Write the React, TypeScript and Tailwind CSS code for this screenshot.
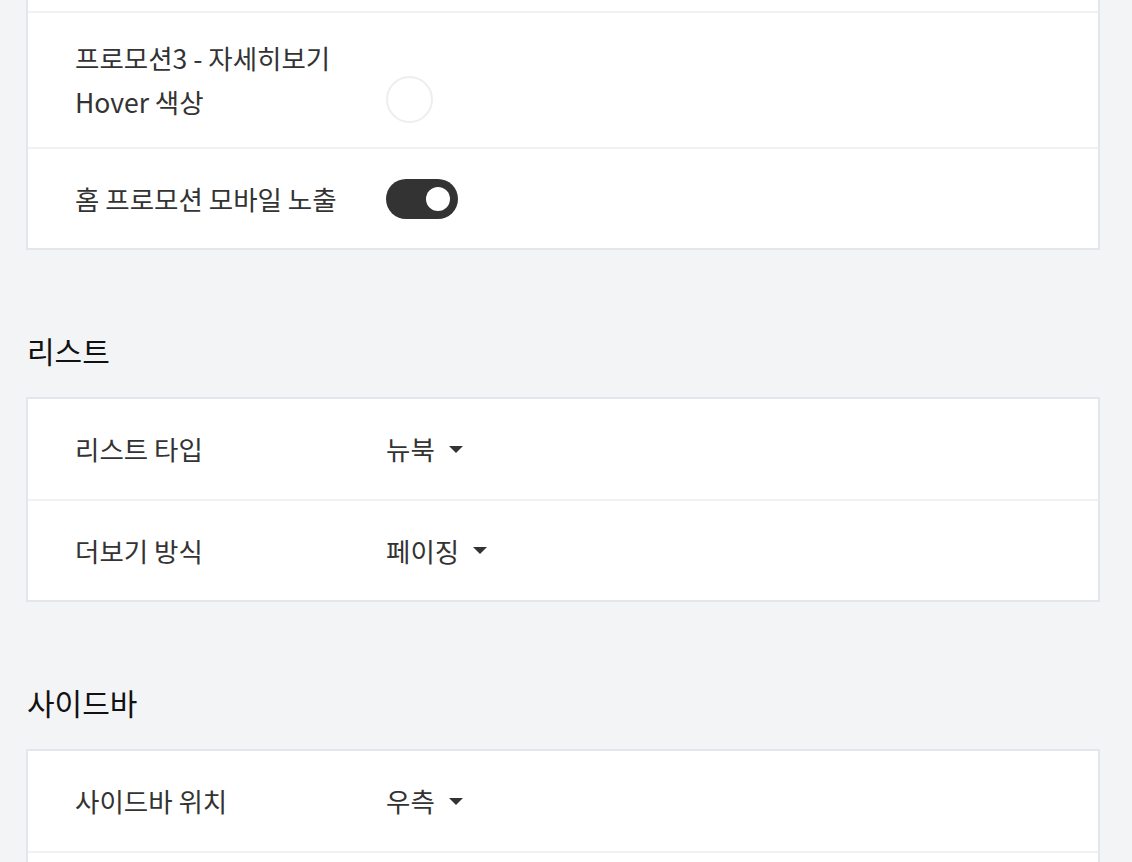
import React from "react";

const font = { fontFamily: '"Noto Sans CJK KR", "Noto Sans", sans-serif' };

function Row({
  label,
  children,
  last,
  align = "items-center",
  pad = "py-[23px]",
}: {
  label?: React.ReactNode;
  children?: React.ReactNode;
  last?: boolean;
  align?: string;
  pad?: string;
}) {
  return (
    <div
      className={`flex ${align} ${pad} pl-[47px] pr-6 ${
        last ? "min-h-[99px]" : "min-h-[102px] border-b-2 border-[#f0f1f5]"
      }`}
    >
      <div className="w-[311px] shrink-0 text-[26.5px] leading-[44px] text-[#333333]">{label}</div>
      <div className="flex items-center">{children}</div>
    </div>
  );
}

function Dropdown({ value }: { value: string }) {
  return (
    <div className="flex items-center text-[26.5px] leading-[44px] text-[#333333]">
      <span>{value}</span>
      <span className="ml-[14px] h-0 w-0 border-l-[7px] border-r-[7px] border-t-[7px] border-l-transparent border-r-transparent border-t-[#333333]" />
    </div>
  );
}

function Toggle() {
  return (
    <div className="flex h-[40px] w-[72px] items-center justify-end rounded-full bg-[#333333] pr-[8px]">
      <div className="h-[24px] w-[24px] rounded-full bg-white" />
    </div>
  );
}

function Card({ children, className = "" }: { children: React.ReactNode; className?: string }) {
  return <div className={`border-2 border-[#e3e6ed] bg-white ${className}`}>{children}</div>;
}

function Heading({ children }: { children: React.ReactNode }) {
  return (
    <h2 className="mt-[80px] mb-[27px] pl-px text-[30px] leading-[40px] font-normal text-[#111111]">
      {children}
    </h2>
  );
}

export default function App() {
  return (
    <div style={font} className="min-h-[862px] overflow-hidden bg-[#f3f4f6] pl-[26px] pr-[32px]">
      <Card className="-mt-[91px]">
        <Row />
        <Row
          align="items-end"
          pad="py-[23px]"
          label={
            <>
              프로모션3 - 자세히보기
              <br />
              Hover 색상
            </>
          }
        >
          <div className="mb-px h-[47px] w-[47px] rounded-full border-2 border-[#eeeeee]" />
        </Row>
        <Row label="홈 프로모션 모바일 노출" last>
          <Toggle />
        </Row>
      </Card>

      <Heading>리스트</Heading>
      <Card>
        <Row label="리스트 타입">
          <Dropdown value="뉴북" />
        </Row>
        <Row label="더보기 방식" last>
          <Dropdown value="페이징" />
        </Row>
      </Card>

      <Heading>사이드바</Heading>
      <Card>
        <Row label="사이드바 위치">
          <Dropdown value="우측" />
        </Row>
        <Row last />
      </Card>
    </div>
  );
}
